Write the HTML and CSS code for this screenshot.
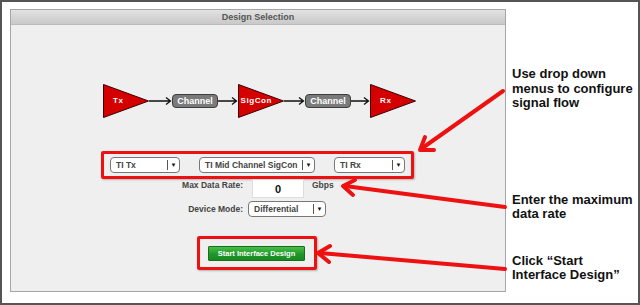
FILE: index.html
```html
<!DOCTYPE html>
<html lang="en">

<head>
    <meta charset="UTF-8">
    <title>Design Selection</title>
    <link rel="stylesheet" href="styles.css">
</head>

<body>

    <div class="frame">
        <!-- Design selection panel -->
        <div class="panel">
            <div class="panel-header">Design Selection</div>

            <!-- Signal chain -->
            <div class="chain">
                <svg class="amp" width="46" height="34" viewBox="0 0 46 34">
                    <polygon points="0.5,0.5 45.5,17 0.5,33.5" fill="#d40000" stroke="#3a0000" />
                    <text x="10" y="19" class="amp-label">Tx</text>
                </svg>
                <svg class="link" width="23" height="10" viewBox="0 0 23 10">
                    <path d="M0 5 H21 M17 1.5 L21.5 5 L17 8.5" fill="none" stroke="#111" stroke-width="1.3" />
                </svg>
                <div class="channel">Channel</div>
                <svg class="link" width="20" height="10" viewBox="0 0 20 10">
                    <path d="M0 5 H18 M14 1.5 L18.5 5 L14 8.5" fill="none" stroke="#111" stroke-width="1.3" />
                </svg>
                <svg class="amp" width="46" height="34" viewBox="0 0 46 34">
                    <polygon points="0.5,0.5 45.5,17 0.5,33.5" fill="#d40000" stroke="#3a0000" />
                    <text x="2.5" y="19" class="amp-label">SigCon</text>
                </svg>
                <svg class="link" width="21" height="10" viewBox="0 0 21 10">
                    <path d="M0 5 H19 M15 1.5 L19.5 5 L15 8.5" fill="none" stroke="#111" stroke-width="1.3" />
                </svg>
                <div class="channel">Channel</div>
                <svg class="link" width="19" height="10" viewBox="0 0 19 10">
                    <path d="M0 5 H17 M13 1.5 L17.5 5 L13 8.5" fill="none" stroke="#111" stroke-width="1.3" />
                </svg>
                <svg class="amp" width="46" height="34" viewBox="0 0 46 34">
                    <polygon points="0.5,0.5 45.5,17 0.5,33.5" fill="#d40000" stroke="#3a0000" />
                    <text x="10" y="19" class="amp-label">Rx</text>
                </svg>
            </div>

            <!-- Device drop downs -->
            <div class="highlight selects">
                <div class="select select-tx"><span>TI Tx</span><b>&#9660;</b></div>
                <div class="select select-mid"><span>TI Mid Channel SigCon</span><b>&#9660;</b></div>
                <div class="select select-rx"><span>TI Rx</span><b>&#9660;</b></div>
            </div>

            <div class="form">
                <label class="form-label">Max Data Rate:</label>
                <div class="row">
                    <div class="rate-input">0</div>
                    <span class="unit">Gbps</span>
                </div>
                <label class="form-label">Device Mode:</label>
                <div class="row">
                    <div class="select select-mode"><span>Differential</span><b>&#9660;</b></div>
                </div>
            </div>

            <div class="highlight start">
                <button type="button" class="start-button">Start Interface Design</button>
            </div>
        </div>

        <!-- Notes on the right -->
        <div class="notes">
            <p class="note note-menus">Use drop down menus to configure signal flow</p>
            <p class="note note-rate">Enter the maximum data rate</p>
            <p class="note note-start">Click &ldquo;Start Interface Design&rdquo;</p>
        </div>

        <!-- Red callout arrows -->
        <svg class="callouts" width="640" height="305" viewBox="0 0 640 305">
            <g fill="none" stroke="#ee1111" stroke-width="4" stroke-linecap="round" stroke-linejoin="round">
                <path d="M503 91 L421 149" />
                <path d="M434 150 L420 150 L425 137" />
                <path d="M505 207 L345 186" />
                <path d="M353 195 L343 186 L355 180" />
                <path d="M505 269 L320 253" />
                <path d="M329 262 L318 253 L330 246" />
            </g>
        </svg>
    </div>

</body>

</html>
```

FILE: styles.css
```css
/* Reset */
* {
    margin: 0;
    padding: 0;
    box-sizing: border-box;
}

body {
    font-family: "Liberation Sans", Arial, sans-serif;
    background: #fff;
}

/* Outer frame */
.frame {
    position: relative;
    width: 640px;
    height: 305px;
    border: 2px solid #555;
    display: flex;
    align-items: flex-start;
}

/* Panel */
.panel {
    margin: 7px 0 0 8px;
    width: 496px;
    height: 283px;
    background: #efefef;
    border: 1px solid #a5a5a5;
    display: flex;
    flex-direction: column;
    align-items: center;
}

.panel-header {
    align-self: stretch;
    height: 15px;
    line-height: 14px;
    text-align: center;
    font-size: 9px;
    font-weight: bold;
    color: #555;
    background: linear-gradient(#e2e2e2, #c9c9c9);
    border-bottom: 1px solid #bbb;
}

/* Signal chain */
.chain {
    display: flex;
    align-items: center;
    margin-top: 59px;
    margin-left: 3px;
}

.amp {
    display: block;
}

.amp-label {
    font-family: "Liberation Sans", Arial, sans-serif;
    font-size: 8px;
    font-weight: bold;
    fill: #fff;
    letter-spacing: 0.6px;
}

.link {
    display: block;
}

.channel {
    width: 46px;
    height: 14px;
    line-height: 12px;
    background: #7a7a7a;
    border: 1px solid #3d3d3d;
    border-radius: 4px;
    color: #fff;
    font-size: 9px;
    font-weight: bold;
    text-align: center;
}

/* Red highlight boxes */
.highlight {
    border: 3px solid #ee1111;
    border-radius: 2px;
    box-shadow: 1px 1px 2px rgba(0, 0, 0, 0.25);
}

.selects {
    margin-top: 33px;
    margin-left: -1px;
    width: 313px;
    height: 28px;
    display: flex;
    align-items: center;
    padding: 0 6px;
    justify-content: space-between;
}

/* Drop down */
.select {
    height: 16px;
    background: #fff;
    border: 1px solid #777;
    border-radius: 4px;
    display: flex;
    align-items: center;
    font-size: 8.5px;
    font-weight: bold;
    color: #444;
}

.select span {
    flex: 1;
    padding-left: 5px;
    white-space: nowrap;
}

.select b {
    width: 12px;
    height: 10px;
    border-left: 1px solid #555;
    font-size: 6px;
    line-height: 10px;
    text-align: center;
    color: #111;
}

.select-tx {
    width: 70px;
}

.select-mid {
    width: 116px;
}

.select-rx {
    width: 71px;
}

.select-mode {
    width: 78px;
}

/* Form rows */
.form {
    align-self: flex-start;
    display: grid;
    grid-template-columns: 150px 90px;
    column-gap: 8px;
    row-gap: 3px;
    align-items: center;
    margin-left: 82px;
}

.form-label {
    text-align: right;
    font-size: 8.5px;
    font-weight: bold;
    color: #444;
}

.form-label:first-child {
    margin-top: -8px;
}

.row {
    display: flex;
    align-items: center;
}

.rate-input {
    width: 52px;
    height: 19px;
    margin-left: 1px;
    background: #fff;
    border: 1px solid #ddd;
    text-align: center;
    line-height: 18px;
    font-size: 11px;
    font-weight: bold;
    color: #111;
}

.unit {
    margin-left: 8px;
    margin-top: -8px;
    font-size: 8.5px;
    font-weight: bold;
    color: #444;
}

.select-mode {
    margin-left: -3px;
}

/* Start button */
.start {
    margin-top: 19px;
    margin-left: -3px;
    width: 120px;
    height: 34px;
    display: flex;
    align-items: center;
    justify-content: center;
}

.start-button {
    width: 97px;
    height: 15px;
    border: 1px solid #1c6a1c;
    border-radius: 1px;
    background: linear-gradient(#45c045, #20962a 55%, #178a20);
    color: #fff;
    font-family: "Liberation Sans", Arial, sans-serif;
    font-size: 7.5px;
    font-weight: bold;
}

/* Notes */
.notes {
    display: flex;
    flex-direction: column;
    margin: 65px 0 0 6px;
    width: 124px;
}

.note {
    font-size: 13px;
    font-weight: bold;
    line-height: 14.5px;
    color: #111;
}

.note-rate {
    margin-top: 82px;
}

.note-start {
    margin-top: 32px;
}

/* Arrows on top */
.callouts {
    position: absolute;
    left: -2px;
    top: -2px;
    pointer-events: none;
}
```
